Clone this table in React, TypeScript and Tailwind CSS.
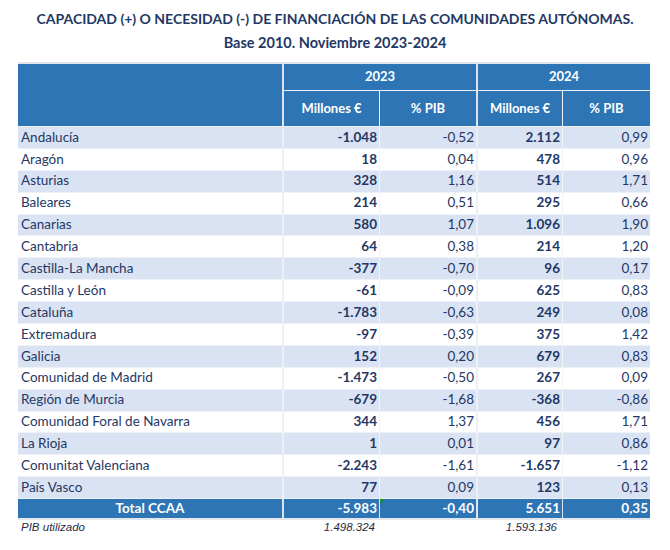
import React from 'react';

type Row = { name: string; m23: string; p23: string; m24: string; p24: string };

const rows: Row[] = [
  { name: 'Andalucía', m23: '-1.048', p23: '-0,52', m24: '2.112', p24: '0,99' },
  { name: 'Aragón', m23: '18', p23: '0,04', m24: '478', p24: '0,96' },
  { name: 'Asturias', m23: '328', p23: '1,16', m24: '514', p24: '1,71' },
  { name: 'Baleares', m23: '214', p23: '0,51', m24: '295', p24: '0,66' },
  { name: 'Canarias', m23: '580', p23: '1,07', m24: '1.096', p24: '1,90' },
  { name: 'Cantabria', m23: '64', p23: '0,38', m24: '214', p24: '1,20' },
  { name: 'Castilla-La Mancha', m23: '-377', p23: '-0,70', m24: '96', p24: '0,17' },
  { name: 'Castilla y León', m23: '-61', p23: '-0,09', m24: '625', p24: '0,83' },
  { name: 'Cataluña', m23: '-1.783', p23: '-0,63', m24: '249', p24: '0,08' },
  { name: 'Extremadura', m23: '-97', p23: '-0,39', m24: '375', p24: '1,42' },
  { name: 'Galicia', m23: '152', p23: '0,20', m24: '679', p24: '0,83' },
  { name: 'Comunidad de Madrid', m23: '-1.473', p23: '-0,50', m24: '267', p24: '0,09' },
  { name: 'Región de Murcia', m23: '-679', p23: '-1,68', m24: '-368', p24: '-0,86' },
  { name: 'Comunidad Foral de Navarra', m23: '344', p23: '1,37', m24: '456', p24: '1,71' },
  { name: 'La Rioja', m23: '1', p23: '0,01', m24: '97', p24: '0,86' },
  { name: 'Comunitat Valenciana', m23: '-2.243', p23: '-1,61', m24: '-1.657', p24: '-1,12' },
  { name: 'País Vasco', m23: '77', p23: '0,09', m24: '123', p24: '0,13' },
];

const font = { fontFamily: 'Lato, "Open Sans", sans-serif' };

export default function App() {
  return (
    <div className="w-[670px] h-[550px] bg-white text-[#1f3864]" style={font}>
      {/* Title */}
      <div className="pt-[7px] text-center font-bold text-[14px] leading-[24px] text-[#1f3864]">
        <div>CAPACIDAD (+) O NECESIDAD (-) DE FINANCIACIÓN DE LAS COMUNIDADES AUTÓNOMAS.</div>
        <div className="text-[14.5px]">Base 2010. Noviembre 2023-2024</div>
      </div>

      {/* Table */}
      <div className="ml-[18px] mt-[7px] w-[632px] border-t-2 border-[#dfe3ea]">
        {/* Header */}
        <div className="flex bg-[#dfe3ea] gap-[2px] h-[62px]">
          <div className="w-[264px] bg-[#2e75b6]" />
          <div className="w-[192px] flex flex-col gap-[1px] bg-[#eef1f6]">
            <div className="h-[26px] bg-[#2e75b6] text-white font-bold text-[13px] flex items-center justify-center">2023</div>
            <div className="flex-1 flex gap-[1px]">
              <div className="w-[95px] bg-[#2e75b6] text-white font-bold text-[13px] flex items-center justify-center">Millones €</div>
              <div className="flex-1 bg-[#2e75b6] text-white font-bold text-[13px] flex items-center justify-center">% PIB</div>
            </div>
          </div>
          <div className="flex-1 flex flex-col gap-[1px] bg-[#eef1f6]">
            <div className="h-[26px] bg-[#2e75b6] text-white font-bold text-[13px] flex items-center justify-center">2024</div>
            <div className="flex-1 flex gap-[1px]">
              <div className="w-[84px] bg-[#2e75b6] text-white font-bold text-[13px] flex items-center justify-center">Millones €</div>
              <div className="flex-1 bg-[#2e75b6] text-white font-bold text-[13px] flex items-center justify-center">% PIB</div>
            </div>
          </div>
        </div>

        {/* Body */}
        {rows.map((r, i) => {
          const bg = i % 2 === 0 ? 'bg-[#dae3f3]' : 'bg-white';
          return (
            <div key={r.name} className="flex h-[21.9px] border-t border-[#eef1f6] text-[13.5px] leading-none">
              <div className={`w-[264px] ${bg} flex items-center pl-[3px]`}>{r.name}</div>
              <div className="w-[2px] bg-[#eceff4]" />
              <div className={`w-[95px] ${bg} flex items-center justify-end pr-[2px] font-bold`}>{r.m23}</div>
              <div className="w-[1px] bg-[#f2f4f8]" />
              <div className={`w-[96px] ${bg} flex items-center justify-end pr-[2px]`}>{r.p23}</div>
              <div className="w-[2px] bg-[#eceff4]" />
              <div className={`w-[84px] ${bg} flex items-center justify-end pr-[2px] font-bold`}>{r.m24}</div>
              <div className="w-[1px] bg-[#f2f4f8]" />
              <div className={`flex-1 ${bg} flex items-center justify-end pr-[2px]`}>{r.p24}</div>
            </div>
          );
        })}

        {/* Total */}
        <div className="flex h-[21.9px] border-t border-[#eef1f6] border-b-2 border-b-[#e4e7ec] text-[13.5px] leading-none text-white font-bold">
          <div className="w-[264px] bg-[#2e75b6] flex items-center justify-center">Total CCAA</div>
          <div className="w-[2px] bg-[#dfe3ea]" />
          <div className="w-[95px] bg-[#2e75b6] flex items-center justify-end pr-[2px]">-5.983</div>
          <div className="w-[1px] bg-[#dfe3ea]" />
          <div className="relative w-[96px] bg-[#2e75b6] flex items-center justify-end pr-[2px]">
            <span className="absolute left-0 top-0 w-0 h-0 border-t-[5px] border-r-[5px] border-t-[#1e8a2e] border-r-transparent" />
            -0,40
          </div>
          <div className="w-[2px] bg-[#dfe3ea]" />
          <div className="w-[84px] bg-[#2e75b6] flex items-center justify-end pr-[2px]">5.651</div>
          <div className="w-[1px] bg-[#dfe3ea]" />
          <div className="flex-1 bg-[#2e75b6] flex items-center justify-end pr-[2px]">0,35</div>
        </div>

        {/* Footer */}
        <div className="flex italic text-[11.5px] text-[#1f2a44] leading-[14px]" style={{ fontFamily: '"Liberation Sans", Arial, sans-serif' }}>
          <div className="w-[264px] pl-[3px]">PIB utilizado</div>
          <div className="w-[2px]" />
          <div className="w-[95px] text-right pr-[4px]">1.498.324</div>
          <div className="w-[1px]" />
          <div className="w-[96px]" />
          <div className="w-[2px]" />
          <div className="w-[84px] text-right pr-[5px]">1.593.136</div>
        </div>
      </div>
    </div>
  );
}
